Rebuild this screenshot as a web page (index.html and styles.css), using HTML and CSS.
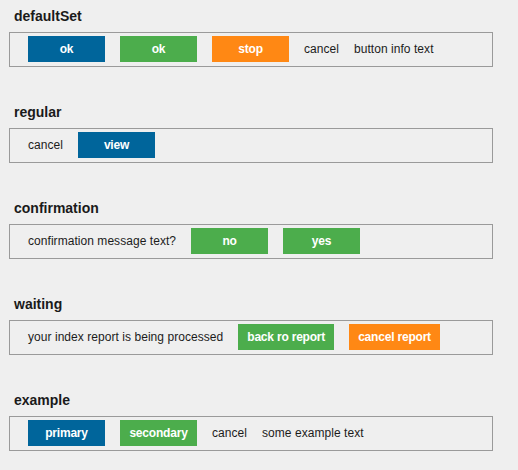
FILE: index.html
```html
<!DOCTYPE html>
<html>
<head>
<meta charset="utf-8">
<link rel="stylesheet" href="styles.css">
</head>
<body>
  <section class="group">
    <h2 class="title">defaultSet</h2>
    <div class="bar">
      <button class="btn btn-blue">ok</button>
      <button class="btn btn-green">ok</button>
      <button class="btn btn-orange">stop</button>
      <span class="txt">cancel</span>
      <span class="txt">button info text</span>
    </div>
  </section>
  <section class="group">
    <h2 class="title">regular</h2>
    <div class="bar">
      <span class="txt">cancel</span>
      <button class="btn btn-blue">view</button>
    </div>
  </section>
  <section class="group">
    <h2 class="title">confirmation</h2>
    <div class="bar">
      <span class="txt">confirmation message text?</span>
      <button class="btn btn-green">no</button>
      <button class="btn btn-green">yes</button>
    </div>
  </section>
  <section class="group">
    <h2 class="title">waiting</h2>
    <div class="bar">
      <span class="txt">your index report is being processed</span>
      <button class="btn btn-green">back ro report</button>
      <button class="btn btn-orange">cancel report</button>
    </div>
  </section>
  <section class="group">
    <h2 class="title">example</h2>
    <div class="bar">
      <button class="btn btn-blue">primary</button>
      <button class="btn btn-green">secondary</button>
      <span class="txt">cancel</span>
      <span class="txt">some example text</span>
    </div>
  </section>
</body>
</html>
```
FILE: styles.css
```css
html, body {
  margin: 0;
  padding: 0;
  background: #efefef;
}
body {
  padding: 8px 0 0 9px;
  font-family: "Liberation Sans", Arial, Helvetica, sans-serif;
  color: #1c1c1c;
  display: flex;
  flex-direction: column;
  gap: 37px;
}
.group {
  display: flex;
  flex-direction: column;
  gap: 8px;
  width: 484px;
}
.title {
  margin: 0 0 0 5px;
  font-size: 14px;
  line-height: 16px;
  font-weight: bold;
  color: #1a1a1a;
}
.bar {
  box-sizing: border-box;
  height: 35px;
  border: 1px solid #9a9a9a;
  padding: 3px 18px 4px 18px;
  display: flex;
  align-items: center;
  gap: 15px;
}
.txt {
  font-size: 12px;
  line-height: 14px;
  letter-spacing: 0.05px;
  color: #1c1c1c;
}
.btn {
  box-sizing: border-box;
  height: 26px;
  min-width: 77px;
  padding: 0 9px;
  border: 0;
  margin: 0;
  font-family: "Liberation Sans", Arial, Helvetica, sans-serif;
  font-size: 12px;
  font-weight: bold;
  letter-spacing: -0.2px;
  color: #ffffff;
  text-align: center;
  cursor: pointer;
}
.btn-blue { background: #00659b; }
.btn-green { background: #4cad4c; }
.btn-orange { background: #ff8814; }
```
